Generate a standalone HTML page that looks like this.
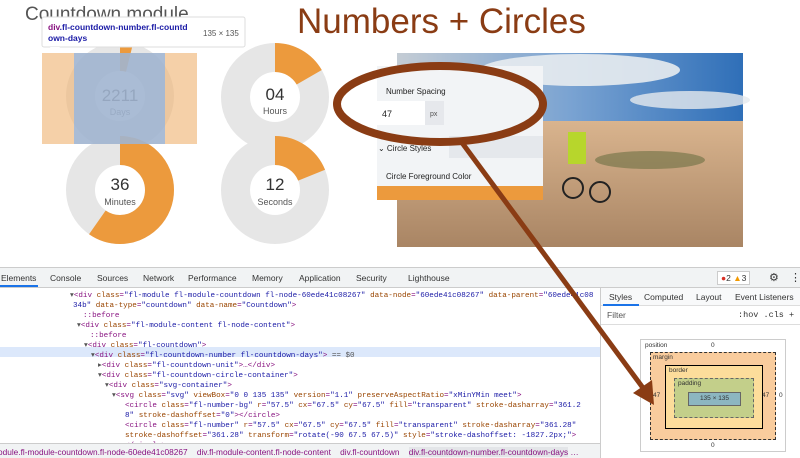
<!DOCTYPE html>
<html><head><style>
*{margin:0;padding:0;box-sizing:border-box}
body{width:800px;height:458px;overflow:hidden;background:#fff;font-family:"Liberation Sans",sans-serif;position:relative}
.abs{position:absolute}
.code{font-family:"Liberation Mono",monospace;font-size:7.6px;line-height:10px;color:#881280}
.code div{height:10px;white-space:pre}
.t{color:#881280}.a{color:#994500}.v{color:#1a1aa6}.g{color:#555}
</style></head><body>
<svg class="abs" style="left:0;top:0" width="800" height="268">
<defs><linearGradient id="sky" x1="0" y1="0" x2="1" y2="0"><stop offset="0" stop-color="#c4ccd4"/><stop offset=".5" stop-color="#7aa3d2"/><stop offset="1" stop-color="#2f6fb8"/></linearGradient>
<linearGradient id="sand" x1="0" y1="0" x2="0" y2="1"><stop offset="0" stop-color="#d9b48e"/><stop offset="1" stop-color="#a98564"/></linearGradient></defs>
<rect x="397" y="53" width="346" height="68" fill="url(#sky)"/>
<ellipse cx="580" cy="70" rx="100" ry="16" fill="#e8ecef" opacity=".9"/>
<ellipse cx="690" cy="100" rx="60" ry="9" fill="#e6eaee" opacity=".8"/>
<rect x="397" y="121" width="346" height="126" fill="url(#sand)"/>
<ellipse cx="650" cy="160" rx="55" ry="9" fill="#6d7042" opacity=".6"/>
<circle cx="573" cy="188" r="10" fill="none" stroke="#222" stroke-width="2"/>
<circle cx="600" cy="192" r="10" fill="none" stroke="#222" stroke-width="2"/>
<rect x="568" y="132" width="18" height="32" fill="#b7d62c"/>
<text x="25" y="20" font-family="Liberation Sans" font-size="19" fill="#555">Countdown module</text>
<text x="297" y="33" font-family="Liberation Sans" font-size="35" fill="#8a3c14">Numbers + Circles</text>
<g fill="none" stroke-width="29">
<circle cx="120" cy="96" r="39.5" stroke="#e6e6e6"/>
<circle cx="120" cy="96" r="39.5" stroke="#ec9a3d" pathLength="360" stroke-dasharray="14 400" transform="rotate(-90 120 96)"/>
<circle cx="275" cy="97" r="39.5" stroke="#e6e6e6"/>
<circle cx="275" cy="97" r="39.5" stroke="#ec9a3d" pathLength="360" stroke-dasharray="60 400" transform="rotate(-90 275 97)"/>
<circle cx="120" cy="190" r="39.5" stroke="#e6e6e6"/>
<circle cx="120" cy="190" r="39.5" stroke="#ec9a3d" pathLength="360" stroke-dasharray="215 400" transform="rotate(-90 120 190)"/>
<circle cx="275" cy="190" r="39.5" stroke="#e6e6e6"/>
<circle cx="275" cy="190" r="39.5" stroke="#ec9a3d" pathLength="360" stroke-dasharray="68 400" transform="rotate(-90 275 190)"/>
</g>
<g font-family="Liberation Sans" text-anchor="middle">
<text x="120" y="101" font-size="17" fill="#333">2211</text><text x="120" y="115" font-size="9" fill="#555">Days</text>
<text x="275" y="100" font-size="17" fill="#333">04</text><text x="275" y="114" font-size="9" fill="#555">Hours</text>
<text x="120" y="190" font-size="17" fill="#333">36</text><text x="120" y="205" font-size="9" fill="#555">Minutes</text>
<text x="275" y="190" font-size="17" fill="#333">12</text><text x="275" y="205" font-size="9" fill="#555">Seconds</text>
</g>
<rect x="42" y="53" width="155" height="91" fill="#efb77a" opacity=".65"/>
<rect x="74" y="53" width="91" height="91" fill="#8ab4e8" opacity=".7"/>
<rect x="42" y="17" width="203" height="30" rx="2" fill="#fff" stroke="#ddd"/>
<path d="M50 47 L55 52 L60 47 Z" fill="#fff"/>
<text x="48" y="30" font-size="8.5" font-weight="bold" font-family="Liberation Sans"><tspan fill="#881280">div</tspan><tspan fill="#1a1aa6">.fl-countdown-number.fl-countd</tspan></text>
<text x="48" y="41" font-size="8.5" font-weight="bold" font-family="Liberation Sans" fill="#1a1aa6">own-days</text>
<text x="203" y="36" font-size="8" font-family="Liberation Sans" fill="#555">135 × 135</text>
<rect x="377" y="66" width="166" height="134" fill="#f2f4f6"/>
<rect x="449" y="136" width="94" height="22" fill="#e5e8ec"/>
<text x="386" y="94" font-size="8" fill="#222">Number Spacing</text>
<rect x="377" y="101" width="67" height="24" fill="#fff"/>
<rect x="425" y="101" width="19" height="24" fill="#e6e8ec"/>
<text x="382" y="117" font-size="9" fill="#222">47</text>
<text x="430" y="116" font-size="7" fill="#555">px</text>
<text x="378" y="151" font-size="8" fill="#222">⌄  Circle Styles</text>
<text x="386" y="179" font-size="8" fill="#222">Circle Foreground Color</text>
<rect x="377" y="186" width="166" height="14" fill="#ec9a3d"/>
<ellipse cx="440" cy="104" rx="103" ry="38" fill="none" stroke="#8a3c14" stroke-width="8"/>
</svg>

<div class="abs" style="left:0;top:267px;width:800px;height:191px;background:#fff;border-top:1px solid #ccc"></div>
<div class="abs" style="left:0;top:268px;width:800px;height:20px;background:#f1f3f4;border-bottom:1px solid #ccc;font-size:8.5px;color:#333">
<span class="abs" style="left:1px;top:5px">Elements</span><span class="abs" style="left:0;top:17px;width:38px;height:2px;background:#1a73e8"></span>
<span class="abs" style="left:50px;top:5px">Console</span><span class="abs" style="left:97px;top:5px">Sources</span>
<span class="abs" style="left:143px;top:5px">Network</span><span class="abs" style="left:188px;top:5px">Performance</span>
<span class="abs" style="left:252px;top:5px">Memory</span><span class="abs" style="left:299px;top:5px">Application</span>
<span class="abs" style="left:356px;top:5px">Security</span><span class="abs" style="left:408px;top:5px">Lighthouse</span>
<span class="abs" style="left:717px;top:3px;border:1px solid #ccc;padding:1px 3px;background:#fff"><span style="color:#d93025">●</span>2 <span style="color:#f29900">▲</span>3</span>
<span class="abs" style="left:769px;top:3px;font-size:11px">⚙</span><span class="abs" style="left:790px;top:3px;font-size:11px">⋮</span>
</div>
<div class="abs" style="left:0;top:347px;width:600px;height:10px;background:#dce8fb"></div>
<div class="abs code" style="left:0;top:291px;width:600px;height:152px;overflow:hidden">
<div style="padding-left:70px"><span class="g">▾</span>&lt;div <span class="a">class</span>=<span class="v">"fl-module fl-module-countdown fl-node-60ede41c08267"</span> <span class="a">data-node</span>=<span class="v">"60ede41c08267"</span> <span class="a">data-parent</span>=<span class="v">"60ede41c08</span></div>
<div style="padding-left:73px"><span class="v">34b"</span> <span class="a">data-type</span>=<span class="v">"countdown"</span> <span class="a">data-name</span>=<span class="v">"Countdown"</span>&gt;</div>
<div style="padding-left:83px">::before</div>
<div style="padding-left:77px"><span class="g">▾</span>&lt;div <span class="a">class</span>=<span class="v">"fl-module-content fl-node-content"</span>&gt;</div>
<div style="padding-left:90px">::before</div>
<div style="padding-left:84px"><span class="g">▾</span>&lt;div <span class="a">class</span>=<span class="v">"fl-countdown"</span>&gt;</div>
<div style="padding-left:91px"><span class="g">▾</span>&lt;div <span class="a">class</span>=<span class="v">"fl-countdown-number fl-countdown-days"</span>&gt; <span class="g">== $0</span></div>
<div style="padding-left:98px"><span class="g">▸</span>&lt;div <span class="a">class</span>=<span class="v">"fl-countdown-unit"</span>&gt;…&lt;/div&gt;</div>
<div style="padding-left:98px"><span class="g">▾</span>&lt;div <span class="a">class</span>=<span class="v">"fl-countdown-circle-container"</span>&gt;</div>
<div style="padding-left:105px"><span class="g">▾</span>&lt;div <span class="a">class</span>=<span class="v">"svg-container"</span>&gt;</div>
<div style="padding-left:112px"><span class="g">▾</span>&lt;svg <span class="a">class</span>=<span class="v">"svg"</span> <span class="a">viewBox</span>=<span class="v">"0 0 135 135"</span> <span class="a">version</span>=<span class="v">"1.1"</span> <span class="a">preserveAspectRatio</span>=<span class="v">"xMinYMin meet"</span>&gt;</div>
<div style="padding-left:125px">&lt;circle <span class="a">class</span>=<span class="v">"fl-number-bg"</span> <span class="a">r</span>=<span class="v">"57.5"</span> <span class="a">cx</span>=<span class="v">"67.5"</span> <span class="a">cy</span>=<span class="v">"67.5"</span> <span class="a">fill</span>=<span class="v">"transparent"</span> <span class="a">stroke-dasharray</span>=<span class="v">"361.2</span></div>
<div style="padding-left:125px"><span class="v">8"</span> <span class="a">stroke-dashoffset</span>=<span class="v">"0"</span>&gt;&lt;/circle&gt;</div>
<div style="padding-left:125px">&lt;circle <span class="a">class</span>=<span class="v">"fl-number"</span> <span class="a">r</span>=<span class="v">"57.5"</span> <span class="a">cx</span>=<span class="v">"67.5"</span> <span class="a">cy</span>=<span class="v">"67.5"</span> <span class="a">fill</span>=<span class="v">"transparent"</span> <span class="a">stroke-dasharray</span>=<span class="v">"361.28"</span></div>
<div style="padding-left:125px"><span class="a">stroke-dashoffset</span>=<span class="v">"361.28"</span> <span class="a">transform</span>=<span class="v">"rotate(-90 67.5 67.5)"</span> <span class="a">style</span>=<span class="v">"stroke-dashoffset: -1827.2px;"</span>&gt;</div>
<div style="padding-left:125px">&lt;/circle&gt;</div>
</div>
<div class="abs" style="left:0;top:443px;width:600px;height:15px;background:#f1f3f4;border-top:1px solid #ccc;font-size:8.3px;color:#881280;white-space:nowrap;padding-top:3px;overflow:hidden">
<span style="margin-left:-2px">odule.fl-module-countdown.fl-node-60ede41c08267</span>&nbsp;&nbsp;&nbsp;&nbsp;<span>div.fl-module-content.fl-node-content</span>&nbsp;&nbsp;&nbsp;&nbsp;<span>div.fl-countdown</span>&nbsp;&nbsp;&nbsp;&nbsp;<span style="background:#e3e5e8">div.fl-countdown-number.fl-countdown-days</span> …</div>
<div class="abs" style="left:600px;top:288px;width:200px;height:170px;border-left:1px solid #ccc;background:#fff;font-size:8.5px;color:#333">
<div class="abs" style="left:0;top:0;width:200px;height:18px;border-bottom:1px solid #ddd;background:#f8f9fa"></div>
<span class="abs" style="left:8px;top:4px">Styles</span><span class="abs" style="left:2px;top:16px;width:36px;height:2px;background:#1a73e8"></span>
<span class="abs" style="left:43px;top:4px">Computed</span><span class="abs" style="left:95px;top:4px">Layout</span><span class="abs" style="left:134px;top:4px">Event Listeners</span>
<span class="abs" style="left:6px;top:22px;color:#555">Filter</span>
<span class="abs" style="left:137px;top:22px;font-family:'Liberation Mono',monospace">:hov .cls +</span>
<div class="abs" style="left:0;top:36px;width:200px;border-top:1px solid #ddd"></div>
<div class="abs" style="left:39px;top:51px;width:146px;height:113px;border:1px solid #ccc;font-size:6.5px">
<span class="abs" style="left:4px;top:2px">position</span><span class="abs" style="left:70px;top:2px">0</span>
<span class="abs" style="left:2px;top:52px">0</span><span class="abs" style="left:138px;top:52px">0</span><span class="abs" style="left:70px;top:102px">0</span>
<div class="abs" style="left:9px;top:12px;width:126px;height:88px;background:#f9cc9d;border:1px dashed #333">
<span class="abs" style="left:2px;top:1px">margin</span><span class="abs" style="left:2px;top:39px">47</span><span class="abs" style="left:111px;top:39px">47</span>
<div class="abs" style="left:14px;top:12px;width:98px;height:64px;background:#fddd9b;border:1px solid #000">
<span class="abs" style="left:3px;top:1px">border</span>
<div class="abs" style="left:8px;top:12px;width:80px;height:40px;background:#c3cf8a;border:1px dashed #666">
<span class="abs" style="left:3px;top:1px">padding</span>
<div class="abs" style="left:13px;top:13px;width:53px;height:14px;background:#8cb6c0;border:1px solid #666;text-align:center;line-height:12px">135 × 135</div>
</div></div></div></div>
</div>
<svg class="abs" style="left:0;top:0" width="800" height="458">
<line x1="460" y1="140" x2="646" y2="392" stroke="#8a3c14" stroke-width="5"/>
<path d="M654 405 L633 393 L652 380 Z" fill="#8a3c14"/>
</svg>
</body></html>
